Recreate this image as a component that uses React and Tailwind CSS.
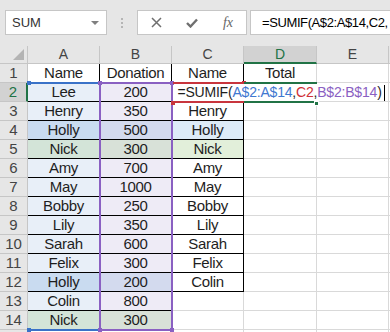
import React from 'react';

const colA = ['Name', 'Lee', 'Henry', 'Holly', 'Nick', 'Amy', 'May', 'Bobby', 'Lily', 'Sarah', 'Felix', 'Holly', 'Colin', 'Nick'];
const colB = ['Donation', '200', '350', '500', '300', '700', '1000', '250', '350', '600', '300', '200', '800', '300'];
const colC = ['Name', '', 'Henry', 'Holly', 'Nick', 'Amy', 'May', 'Bobby', 'Lily', 'Sarah', 'Felix', 'Colin'];

const fillA = (r) => {
  if (r === 1 || r > 14) return 'bg-white';
  if (r === 4 || r === 12) return 'bg-[#c9dbf0]';
  if (r === 5 || r === 14) return 'bg-[#d3e4d8]';
  return 'bg-[#e8eff8]';
};

const fillB = (r) => {
  if (r === 1 || r > 14) return 'bg-white';
  if (r === 4 || r === 12) return 'bg-[#d3daee]';
  if (r === 5 || r === 14) return 'bg-[#d8e1d8]';
  return 'bg-[#eeebf6]';
};

const fillC = (r) => {
  if (r === 4) return 'bg-[#ddebf7]';
  if (r === 5) return 'bg-[#e2efda]';
  return 'bg-white';
};

const cell = 'border-r border-b flex items-center justify-center whitespace-nowrap overflow-hidden text-[15px] tracking-[-0.3px] text-[#1e1e1e]';

const Sq = ({ className }) => <div className={`absolute w-[4px] h-[4px] ${className}`} />;

export default function App() {
  const rows = Array.from({ length: 15 }, (_, i) => i + 1);

  return (
    <div className="relative w-[390px] h-[332px] overflow-hidden bg-white font-['Liberation_Sans',Arial,sans-serif]">
      {/* barre de formule */}
      <div className="h-[46px] bg-[#e6e6e6] flex items-start pt-[10px] pl-[5px]">
        <div className="w-[102px] h-[25px] border border-[#c6c6c6] bg-white flex items-center justify-between pl-[6px] pr-[7px]">
          <span className="text-[13px] text-[#333]">SUM</span>
          <div className="w-0 h-0 border-l-[4px] border-r-[4px] border-t-[4px] border-l-transparent border-r-transparent border-t-[#7f7f7f]" />
        </div>
        <div className="w-[30px] h-[25px] flex flex-col items-center justify-center gap-[2px]">
          <div className="w-[2px] h-[2px] bg-[#b5b5b5]" />
          <div className="w-[2px] h-[2px] bg-[#b5b5b5]" />
          <div className="w-[2px] h-[2px] bg-[#b5b5b5]" />
        </div>
        <div className="w-[110px] h-[25px] border border-[#c6c6c6] bg-white flex items-center">
          <div className="w-[36px] flex justify-center">
            <svg width="11" height="11" viewBox="0 0 11 11">
              <path d="M1 1 L10 10 M10 1 L1 10" stroke="#6f6f6f" strokeWidth="1.5" />
            </svg>
          </div>
          <div className="w-[36px] flex justify-center">
            <svg width="12" height="10" viewBox="0 0 12 10">
              <path d="M1 5 L4.5 8.5 L11 1.5" stroke="#6f6f6f" strokeWidth="2.4" fill="none" />
            </svg>
          </div>
          <div className="w-[36px] flex justify-center">
            <span className="font-['Liberation_Serif',serif] italic text-[14px] text-[#666]">fx</span>
          </div>
        </div>
        <div className="ml-[3px] flex-1 min-w-0 h-[25px] border-y border-l border-[#c6c6c6] bg-white flex items-center pl-[11px] overflow-hidden">
          <span className="text-[13px] tracking-[-0.4px] text-black whitespace-nowrap">=SUMIF(A$2:A$14,C2,</span>
        </div>
      </div>

      {/* feuille */}
      <div className="grid grid-cols-[28px_72px_72px_72px_73px_72px_1fr] grid-rows-[18px_repeat(15,19px)]">
        <div className="relative bg-[#e6e6e6] border-r border-b border-[#c6c6c6]">
          <div className="absolute right-[3px] bottom-[3px] w-0 h-0 border-b-[11px] border-l-[11px] border-l-transparent border-b-[#b4b4b4]" />
        </div>
        <div className="bg-[#e6e6e6] border-r border-b border-[#c6c6c6] flex items-center justify-center text-[14px] text-[#444]">A</div>
        <div className="bg-[#e6e6e6] border-r border-b border-[#c6c6c6] flex items-center justify-center text-[14px] text-[#444]">B</div>
        <div className="bg-[#e6e6e6] border-r border-b border-[#c6c6c6] flex items-center justify-center text-[14px] text-[#444]">C</div>
        <div className="bg-[#d2d2d2] border-r border-r-[#c6c6c6] border-b-2 border-b-[#217346] flex items-center justify-center text-[14px] text-[#217346]">D</div>
        <div className="bg-[#e6e6e6] border-r border-b border-[#c6c6c6] flex items-center justify-center text-[14px] text-[#444]">E</div>
        <div className="bg-[#e6e6e6] border-b border-[#c6c6c6]" />

        {rows.map((r) => (
          <React.Fragment key={r}>
            {r === 2 ? (
              <div className="bg-[#d2d2d2] border-r-2 border-r-[#217346] border-b border-b-[#c6c6c6] flex items-center justify-center text-[15px] text-[#217346]">{r}</div>
            ) : (
              <div className="bg-[#e6e6e6] border-r border-b border-[#c6c6c6] flex items-center justify-center text-[15px] text-[#444]">{r < 15 ? r : ''}</div>
            )}
            <div className={`${cell} ${fillA(r)} ${r <= 14 ? 'border-black' : 'border-[#d9d9d9]'}`}>{colA[r - 1]}</div>
            <div className={`${cell} ${fillB(r)} ${r <= 14 ? 'border-black' : 'border-[#d9d9d9]'}`}>{colB[r - 1]}</div>
            <div className={`${cell} ${fillC(r)} ${r <= 12 ? 'border-black' : 'border-[#d9d9d9]'}`}>{colC[r - 1]}</div>
            <div className={`${cell} border-[#d9d9d9]`}>{r === 1 ? 'Total' : ''}</div>
            <div className={`${cell} border-[#d9d9d9]`} />
            <div className={`${cell} border-r-0 border-[#d9d9d9]`} />
          </React.Fragment>
        ))}
      </div>

      {/* plage A$2:A$14 */}
      <div className="absolute left-[28px] top-[82px] w-[72px] h-[2px] bg-[#3a72c8]" />
      <div className="absolute left-[28px] top-[329px] w-[72px] h-[2px] bg-[#3a72c8]" />
      <Sq className="left-[27px] top-[81px] bg-[#3a72c8]" />
      <Sq className="left-[27px] top-[328px] bg-[#3a72c8]" />

      {/* plage B$2:B$14 */}
      <div className="absolute left-[99px] top-[82px] w-[2px] h-[249px] bg-[#8a60c2]" />
      <div className="absolute left-[171px] top-[82px] w-[2px] h-[249px] bg-[#8a60c2]" />
      <div className="absolute left-[100px] top-[82px] w-[72px] h-[2px] bg-[#8a60c2]" />
      <div className="absolute left-[100px] top-[329px] w-[72px] h-[2px] bg-[#8a60c2]" />
      <Sq className="left-[98px] top-[81px] bg-[#8a60c2]" />
      <Sq className="left-[170px] top-[81px] bg-[#8a60c2]" />
      <Sq className="left-[98px] top-[328px] bg-[#8a60c2]" />
      <Sq className="left-[170px] top-[328px] bg-[#8a60c2]" />

      {/* C2 */}
      <div className="absolute left-[173px] top-[82px] w-[71px] h-[2px] bg-[#c8353d]" />
      <div className="absolute left-[173px] top-[101px] w-[71px] h-[2px] bg-[#c8353d]" />
      <Sq className="left-[242px] top-[81px] bg-[#c8353d]" />
      <Sq className="left-[171px] top-[101px] bg-[#c8353d]" />

      {/* cellule active D2 */}
      <div className="absolute left-[244px] top-[82px] w-[73px] h-[2px] bg-[#217346]" />
      <div className="absolute left-[244px] top-[101px] w-[73px] h-[2px] bg-[#217346]" />
      <div className="absolute left-[314px] top-[101px] w-[5px] h-[5px] bg-[#217346] border border-white" />

      {/* édition en cours */}
      <div className="absolute left-[174px] top-[84px] w-[214px] h-[17px] bg-white flex items-center justify-center text-[14px] tracking-[-0.2px] whitespace-nowrap">
        <span className="text-[#1e1e1e]">=SUMIF(</span>
        <span className="text-[#3f78d0]">A$2:A$14</span>
        <span className="text-[#1e1e1e]">,</span>
        <span className="text-[#cf3038]">C2</span>
        <span className="text-[#1e1e1e]">,</span>
        <span className="text-[#8a60c2]">B$2:B$14</span>
        <span className="text-[#1e1e1e]">)</span>
        <span className="ml-[2px] w-px h-[16px] bg-black" />
      </div>
    </div>
  );
}
